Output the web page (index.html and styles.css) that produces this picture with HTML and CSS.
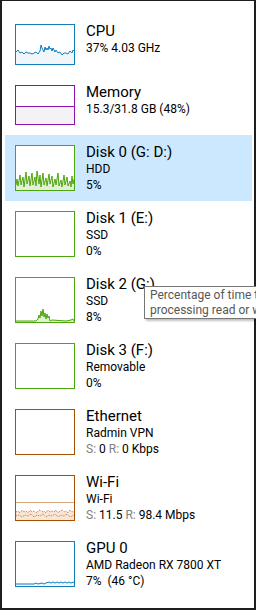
FILE: index.html
```html
<!DOCTYPE html>
<html>
<head>
<meta charset="utf-8">
<link rel="stylesheet" href="styles.css">
</head>
<body>
<div class="window">
  <ul class="list">
    <li class="item">
      <div class="thumb thumb-cpu">
        <svg width="58" height="39" viewBox="0 0 58 39">
          <polygon class="fill-blue" points="0,39 0,27 2,25 4,28 6,27 8,29 10,27 12,28 14,28 16,29 18,28 20,27 22,29 24,26 25,20 26,23 27,25 28,27 29,22 30,25 31,23 32,25 33,21 34,24 35,23 36,26 37,23 39,27 40,25 42,28 44,27 46,30 48,28 50,28 52,29 54,26 56,28 57,25 58,26 58,39"/>
          <polyline class="line-blue" points="0,27 2,25 4,28 6,27 8,29 10,27 12,28 14,28 16,29 18,28 20,27 22,29 24,26 25,20 26,23 27,25 28,27 29,22 30,25 31,23 32,25 33,21 34,24 35,23 36,26 37,23 39,27 40,25 42,28 44,27 46,30 48,28 50,28 52,29 54,26 56,28 57,25 58,26"/>
        </svg>
      </div>
      <div class="info">
        <div class="title">CPU</div>
        <div class="sub">37% 4.03 GHz</div>
      </div>
    </li>
    <li class="item">
      <div class="thumb thumb-mem">
        <svg width="58" height="38" viewBox="0 0 58 38">
          <rect class="fill-mem" x="0" y="20.5" width="58" height="18"/>
          <line class="line-mem" x1="0" y1="20.5" x2="58" y2="20.5"/>
        </svg>
      </div>
      <div class="info">
        <div class="title">Memory</div>
        <div class="sub">15.3/31.8 GB (48%)</div>
      </div>
    </li>
    <li class="item item-disk selected">
      <div class="thumb thumb-disk">
        <svg width="58" height="44" viewBox="0 0 58 44">
          <polygon class="fill-green" points="0,44 0,39 1,33 2,40 4,29 5,39 7,31 8,41 10,26 11,38 13,30 14,40 16,27 17,39 19,31 20,40 21,25 23,38 24,29 25,41 27,27 28,39 30,32 31,40 33,28 34,38 36,30 37,41 39,33 40,39 42,27 43,40 45,34 46,41 48,29 49,39 51,31 52,40 54,35 55,41 56,30 57,38 58,33 58,44"/>
          <polyline class="line-green" points="0,39 1,33 2,40 4,29 5,39 7,31 8,41 10,26 11,38 13,30 14,40 16,27 17,39 19,31 20,40 21,25 23,38 24,29 25,41 27,27 28,39 30,32 31,40 33,28 34,38 36,30 37,41 39,33 40,39 42,27 43,40 45,34 46,41 48,29 49,39 51,31 52,40 54,35 55,41 56,30 57,38 58,33"/>
        </svg>
      </div>
      <div class="info">
        <div class="title">Disk 0 (G: D:)</div>
        <div class="sub">HDD</div>
        <div class="sub">5%</div>
      </div>
    </li>
    <li class="item item-disk">
      <div class="thumb thumb-disk"></div>
      <div class="info">
        <div class="title">Disk 1 (E:)</div>
        <div class="sub">SSD</div>
        <div class="sub">0%</div>
      </div>
    </li>
    <li class="item item-disk">
      <div class="thumb thumb-disk">
        <svg width="58" height="44" viewBox="0 0 58 44">
          <polygon class="fill-green" points="0,44 0,43 20,43 22,41 23,37 24,40 25,33 26,38 27,31 28,39 29,35 30,41 31,36 32,40 33,38 34,43 36,42 50,43 55,42 57,41 58,43 58,44"/>
          <polyline class="line-green" points="0,43 20,43 22,41 23,37 24,40 25,33 26,38 27,31 28,39 29,35 30,41 31,36 32,40 33,38 34,43 36,42 50,43 55,42 57,41 58,43"/>
        </svg>
      </div>
      <div class="info">
        <div class="title">Disk 2 (G:)</div>
        <div class="sub">SSD</div>
        <div class="sub">8%</div>
      </div>
    </li>
    <li class="item item-disk">
      <div class="thumb thumb-disk"></div>
      <div class="info">
        <div class="title">Disk 3 (F:)</div>
        <div class="sub">Removable</div>
        <div class="sub">0%</div>
      </div>
    </li>
    <li class="item item-disk">
      <div class="thumb thumb-net"></div>
      <div class="info">
        <div class="title">Ethernet</div>
        <div class="sub">Radmin VPN</div>
        <div class="sub"><span class="dim">S:</span> 0 <span class="dim">R:</span> 0 Kbps</div>
      </div>
    </li>
    <li class="item item-disk">
      <div class="thumb thumb-net">
        <svg width="58" height="44" viewBox="0 0 58 44">
          <line class="line-send" x1="0" y1="26.5" x2="58" y2="26.5"/>
          <polygon class="fill-orange" points="0,44 0,36 2,35 4,37 6,34 8,36 10,35 12,37 14,34 16,36 18,35 20,37 22,35 24,34 26,36 28,35 30,37 32,34 34,36 36,35 38,36 40,34 42,37 44,35 46,34 48,36 50,35 52,37 54,34 56,36 58,35 58,44"/>
          <polyline class="line-orange" points="0,36 2,35 4,37 6,34 8,36 10,35 12,37 14,34 16,36 18,35 20,37 22,35 24,34 26,36 28,35 30,37 32,34 34,36 36,35 38,36 40,34 42,37 44,35 46,34 48,36 50,35 52,37 54,34 56,36 58,35"/>
          <polyline class="line-orange" points="0,40 3,39 6,41 9,39 12,40 15,38 18,41 21,39 24,40 27,38 30,41 33,39 36,40 39,38 42,41 45,39 48,40 51,38 54,41 58,39"/>
        </svg>
      </div>
      <div class="info">
        <div class="title">Wi-Fi</div>
        <div class="sub">Wi-Fi</div>
        <div class="sub"><span class="dim">S:</span> 11.5 <span class="dim">R:</span> 98.4 Mbps</div>
      </div>
    </li>
    <li class="item item-disk">
      <div class="thumb thumb-gpu">
        <svg width="58" height="44" viewBox="0 0 58 44">
          <polygon class="fill-blue" points="0,44 0,42 18,42 20,41 22,42 26,41 28,42 30,41 33,40 35,41 37,40 39,41 41,40 43,41 45,40 47,41 49,40 51,41 53,40 55,41 58,40 58,44"/>
          <polyline class="line-blue" points="0,42 18,42 20,41 22,42 26,41 28,42 30,41 33,40 35,41 37,40 39,41 41,40 43,41 45,40 47,41 49,40 51,41 53,40 55,41 58,40"/>
        </svg>
      </div>
      <div class="info">
        <div class="title">GPU 0</div>
        <div class="sub">AMD Radeon RX 7800 XT</div>
        <div class="sub">7%&nbsp; (46 °C)</div>
      </div>
    </li>
  </ul>
</div>
<div class="tooltip">
  <div class="tip-line">Percentage of time t</div>
  <div class="tip-line">processing read or w</div>
</div>
</body>
</html>
```

FILE: styles.css
```css
html, body {
  margin: 0;
  padding: 0;
}
body {
  position: relative;
  width: 256px;
  height: 610px;
  overflow: hidden;
  background: #ffffff;
  font-family: Roboto, "Liberation Sans", sans-serif;
  color: #000000;
}
.window {
  box-sizing: border-box;
  width: 256px;
  height: 610px;
  border: 2px solid #1e1e1e;
  border-top-width: 1px;
  padding: 13px 2px 0 3px;
  background: #ffffff;
}
.list {
  list-style: none;
  margin: 0;
  padding: 0;
}
.item {
  display: flex;
  align-items: flex-start;
  gap: 11px;
  padding: 10px 0 10px 10px;
}
.item.selected {
  background: #cce8ff;
}
.thumb {
  box-sizing: border-box;
  width: 60px;
  height: 46px;
  border: 1px solid;
  flex: none;
}
.thumb svg {
  display: block;
}
.thumb-cpu {
  height: 41px;
  border-color: #117dbb;
}
.thumb-mem {
  height: 40px;
  border-color: #8b12ae;
}
.thumb-disk {
  border-color: #4da60c;
}
.thumb-net {
  border-color: #a74f01;
}
.thumb-gpu {
  border-color: #117dbb;
}
.selected .thumb {
  background: #ffffff;
}
.info {
  margin: -2px 0 -2px 0;
  white-space: nowrap;
}
.title {
  font-size: 15px;
  line-height: 18px;
}
.sub {
  font-size: 12px;
  line-height: 16px;
}
.dim {
  color: #808080;
}
.fill-blue { fill: #f1f6fa; stroke: none; }
.line-blue { fill: none; stroke: #117dbb; stroke-width: 1; }
.fill-mem { fill: #f4f2f4; }
.line-mem { stroke: #8b12ae; stroke-width: 1; }
.fill-green { fill: #e3f0d9; stroke: none; }
.line-green { fill: none; stroke: #4da60c; stroke-width: 1; }
.line-send { stroke: #d9a67c; stroke-width: 1; }
.fill-orange { fill: #f8e6d8; stroke: none; }
.line-orange { fill: none; stroke: #c8703a; stroke-width: 1; stroke-dasharray: 1 1; }
.tooltip {
  position: absolute;
  left: 144px;
  top: 286px;
  width: 112px;
  height: 33px;
  box-sizing: border-box;
  border: 1px solid #767676;
  border-right: none;
  background: #ffffff;
  padding: 1px 0 0 5px;
  box-shadow: 2px 2px 2px rgba(0, 0, 0, 0.25);
  color: #575757;
  font-size: 12px;
  line-height: 15px;
  white-space: nowrap;
  overflow: hidden;
}
```
